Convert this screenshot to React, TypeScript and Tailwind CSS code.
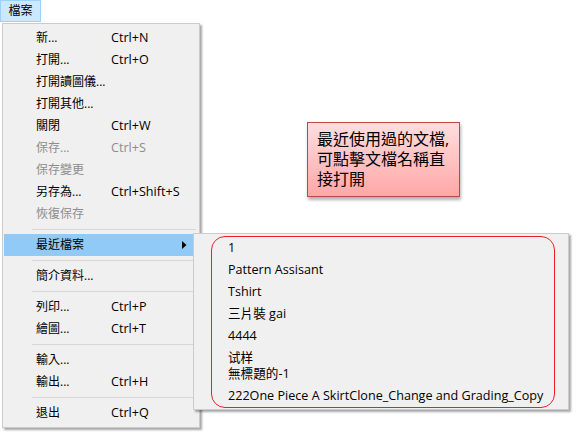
const ui = '[font-family:"Open_Sans","Noto_Sans_CJK_TC",sans-serif]'

type Item = { label: string; keys?: string; disabled?: boolean }

const upper: Item[] = [
  { label: '新...', keys: 'Ctrl+N' },
  { label: '打開...', keys: 'Ctrl+O' },
  { label: '打開讀圖儀...' },
  { label: '打開其他...' },
  { label: '關閉', keys: 'Ctrl+W' },
  { label: '保存...', keys: 'Ctrl+S', disabled: true },
  { label: '保存變更', disabled: true },
  { label: '另存為...', keys: 'Ctrl+Shift+S' },
  { label: '恢復保存', disabled: true },
]

const lower: Item[][] = [
  [{ label: '簡介資料...' }],
  [
    { label: '列印...', keys: 'Ctrl+P' },
    { label: '繪圖...', keys: 'Ctrl+T' },
  ],
  [
    { label: '輸入...' },
    { label: '輸出...', keys: 'Ctrl+H' },
  ],
  [{ label: '退出', keys: 'Ctrl+Q' }],
]

const recent = ['1', 'Pattern Assisant', 'Tshirt', '三片裝 gai', '4444']

function Row({ item }: { item: Item }) {
  return (
    <div
      className={`flex h-[22px] items-center pl-[32px] text-[12px] leading-none ${
        item.disabled ? 'text-[#8d8d8d]' : 'text-black'
      }`}
    >
      <span className="w-[75px] shrink-0">{item.label}</span>
      {item.keys && <span className="text-[12.6px]">{item.keys}</span>}
    </div>
  )
}

function Separator() {
  return (
    <div className="flex h-[9px] items-center pl-[28px] pr-[2px]">
      <div className="h-px w-full bg-[#d7d7d7]" />
    </div>
  )
}

export default function App() {
  return (
    <div className={`relative h-[440px] w-[586px] overflow-hidden bg-white ${ui}`}>
      {/* menu bar */}
      <div className="flex h-[23px]">
        <div className="flex h-[22px] w-[41px] items-center justify-center border border-[#99d1ff] bg-[#cce8ff] text-[12px] text-black">
          檔案
        </div>
      </div>

      {/* file dropdown */}
      <div className="absolute left-[2px] top-[23px] w-[198px] border border-[#cccccc] bg-[#f0f0f0] px-px py-[3px] shadow-[2px_2px_2px_rgba(0,0,0,0.35)]">
        {upper.map((it) => (
          <Row key={it.label} item={it} />
        ))}
        <Separator />
        <div className="relative flex h-[22px] items-center bg-[#91c9f7] pl-[32px] text-[12px] leading-none text-black">
          最近檔案
          <svg
            className="absolute left-[178px] top-[7px]"
            width="5"
            height="8"
            viewBox="0 0 5 8"
          >
            <path d="M0 0 L4.5 4 L0 8 Z" fill="#000" />
          </svg>
        </div>
        {lower.map((g, i) => (
          <div key={i}>
            <Separator />
            {g.map((it) => (
              <Row key={it.label} item={it} />
            ))}
          </div>
        ))}
      </div>

      {/* recent files submenu */}
      <div className="absolute left-[193px] top-[233px] w-[376px] border border-[#cccccc] bg-[#f0f0f0] pb-[2px] pt-[3px] text-[12.6px] text-black shadow-[2px_2px_2px_rgba(0,0,0,0.35)]">
        {recent.map((r) => (
          <div key={r} className="flex h-[22px] items-center pl-[34px] leading-none">
            {r}
          </div>
        ))}
        <div className="flex h-[38px] flex-col justify-center pl-[34px] leading-[16px]">
          <span>试样</span>
          <span>無標題的-1</span>
        </div>
        <div className="flex h-[22px] items-center pl-[34px] leading-none">
          222One Piece A SkirtClone_Change and Grading_Copy
        </div>
        <div className="pointer-events-none absolute left-[17px] top-[2px] h-[172px] w-[344px] rounded-[14px] border border-[#e8202a]" />
      </div>

      {/* callout note */}
      <div className="absolute left-[307px] top-[122px] h-[75px] w-[153px] border border-[#b84a4a] bg-linear-to-b from-[#ffdede] to-[#ffa7a7] px-[9px] pt-[6px] text-[16px] leading-[20px] text-black shadow-[1px_3px_3px_rgba(0,0,0,0.3)]">
        最近使用過的文檔,
        <br />
        可點擊文檔名稱直
        <br />
        接打開
      </div>
    </div>
  )
}
